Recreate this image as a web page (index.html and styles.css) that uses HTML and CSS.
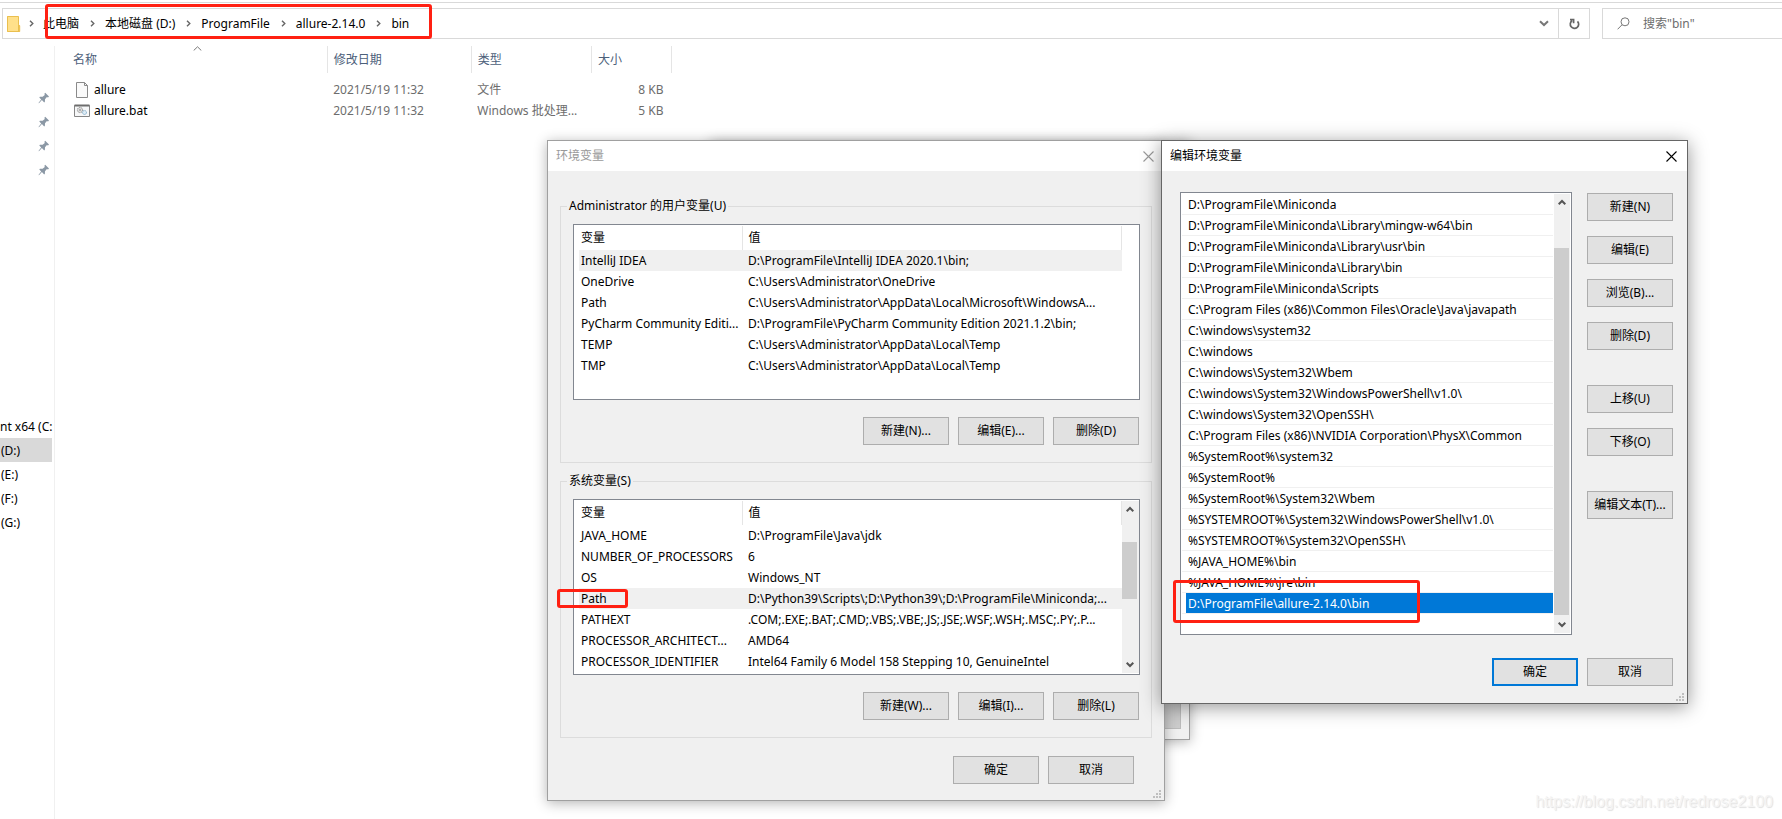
FILE: index.html
```html
<!DOCTYPE html>
<html lang="zh-CN">
<head>
<meta charset="utf-8">
<title>bin</title>
<link rel="stylesheet" href="styles.css">
</head>
<body>
<svg class="defs" width="0" height="0" aria-hidden="true">
  <symbol id="chev-right" viewBox="0 0 5 7"><path d="M1 .8 3.8 3.5 1 6.2" fill="none" stroke="#666" stroke-width="1.4"/></symbol>
  <symbol id="chev-up" viewBox="0 0 8 7"><path d="M.7 5.3 4 2 7.3 5.3" fill="none" stroke="#555" stroke-width="2"/></symbol>
  <symbol id="chev-down" viewBox="0 0 8 7"><path d="M.7 1.7 4 5 7.3 1.7" fill="none" stroke="#555" stroke-width="2"/></symbol>
  <symbol id="pin" viewBox="0 0 12 12"><path d="M7.2.8 11 4.6 10 5.4 8.9 5.1 7 7.2 6.9 9.8 6.2 10.4 3.9 8.1 1.2 11 .5 11.2.8 10.5 3.2 7.5 1.3 5.4 1.9 4.8 4.6 4.8 6.8 2.9 6.4 1.7z" fill="#8b98a5"/></symbol>
  <symbol id="close" viewBox="0 0 11 11"><path d="M.5.5 10.5 10.5M10.5.5.5 10.5" fill="none" stroke="currentColor" stroke-width="1.1"/></symbol>
  <symbol id="grip" viewBox="0 0 8 8"><path d="M6 0h2v2H6zM3 3h2v2H3zM6 3h2v2H6zM0 6h2v2H0zM3 6h2v2H3zM6 6h2v2H6z" fill="#bfbfbf"/></symbol>
</svg>

<main class="explorer">
  <header class="toolbar">
    <nav class="address" aria-label="路径">
      <svg class="folder" width="14" height="16" viewBox="0 0 14 16"><path d="M0 0h11.500v8l1.500 1.500V16H0z" fill="#ffe08a"/><path d="M.5.5h11v8l1.200 1.200v5.800H.5z" fill="none" stroke="#eabf4f"/><path d="M11.500 8.500v7" stroke="#eabf4f"/></svg>
      <svg class="sep root" width="5" height="7"><use href="#chev-right"/></svg>
      <a href="#">此电脑</a>
      <svg class="sep" width="5" height="7"><use href="#chev-right"/></svg>
      <a href="#">本地磁盘 (D:)</a>
      <svg class="sep" width="5" height="7"><use href="#chev-right"/></svg>
      <a href="#">ProgramFile</a>
      <svg class="sep" width="5" height="7"><use href="#chev-right"/></svg>
      <a href="#">allure-2.14.0</a>
      <svg class="sep" width="5" height="7"><use href="#chev-right"/></svg>
      <a href="#">bin</a>
      <button class="drop" aria-label="历史记录"><svg width="10" height="7" viewBox="0 0 10 7"><path d="M1 1.200 5 5 9 1.200" fill="none" stroke="#777" stroke-width="2"/></svg></button>
      <button class="refresh" aria-label="刷新"><svg width="12" height="12" viewBox="0 0 12 12"><path d="M9.500 3.300A4.200 4.200 0 1 1 4 2.800M2 1.700h3.600v3.600" fill="none" stroke="#666" stroke-width="1.700"/></svg></button>
    </nav>
    <label class="search">
      <svg width="13" height="13" viewBox="0 0 13 13"><circle cx="8" cy="4.800" r="4" fill="none" stroke="#777"/><path d="M5 7.800.600 12.300" stroke="#777"/></svg>
      <input type="text" placeholder='搜索"bin"' aria-label="搜索">
    </label>
  </header>

  <div class="content">
    <aside class="sidebar">
      <ul class="pins">
        <li><svg width="12" height="12"><use href="#pin"/></svg></li>
        <li><svg width="12" height="12"><use href="#pin"/></svg></li>
        <li><svg width="12" height="12"><use href="#pin"/></svg></li>
        <li><svg width="12" height="12"><use href="#pin"/></svg></li>
      </ul>
      <ul class="drives">
        <li class="system"><a href="#">nt x64 (C:</a></li>
        <li class="current"><a href="#">(D:)</a></li>
        <li><a href="#">(E:)</a></li>
        <li><a href="#">(F:)</a></li>
        <li><a href="#">(G:)</a></li>
      </ul>
    </aside>
    <div class="listing">
      <svg class="sorted" width="9" height="5" viewBox="0 0 9 5"><path d="M.700 4.500 4.500.800 8.300 4.500" fill="none" stroke="#777"/></svg>
      <table class="files">
        <colgroup><col class="c-name"><col class="c-date"><col class="c-type"><col class="c-size"></colgroup>
        <thead><tr><th>名称</th><th>修改日期</th><th>类型</th><th>大小</th></tr></thead>
        <tbody>
          <tr>
            <td><span class="file"><svg width="16" height="16" viewBox="0 0 16 16"><path d="M2.500.500h8l3 3v12h-11z" fill="#fafafa" stroke="#8a8a8a"/><path d="M10.500.500v3h3" fill="none" stroke="#8a8a8a"/></svg>allure</span></td>
            <td>2021/5/19 11:32</td><td>文件</td><td>8 KB</td>
          </tr>
          <tr>
            <td><span class="file"><svg width="16" height="16" viewBox="0 0 16 16"><path d="M.500 2.500h15v11H.500z" fill="#f6f7f8" stroke="#858585"/><path d="M.500 2.500h15" stroke="#6d6d6d" stroke-width="2"/><circle cx="6" cy="7" r="2.600" fill="#ddd" stroke="#8b8b8b" stroke-dasharray="1.200 .6"/><circle cx="6" cy="7" r=".8" fill="#777"/><circle cx="10.500" cy="9.500" r="2" fill="#dcebf5" stroke="#7da9c6" stroke-dasharray="1.200 .6"/></svg>allure.bat</span></td>
            <td>2021/5/19 11:32</td><td>Windows 批处理...</td><td>5 KB</td>
          </tr>
        </tbody>
      </table>
    </div>
  </div>
</main>

<div class="dialog backdrop-dialog" aria-hidden="true"><div class="pane"></div></div>

<section class="dialog env-dialog" aria-labelledby="env-title">
  <header class="titlebar"><h2 id="env-title">环境变量</h2><button class="close" aria-label="关闭"><svg width="11" height="11"><use href="#close"/></svg></button></header>
  <div class="env-body">
    <fieldset class="group">
      <legend>Administrator 的用户变量(U)</legend>
      <div class="box">
        <table class="vars">
          <colgroup><col class="c-var"><col></colgroup>
          <thead><tr><th>变量</th><th>值</th></tr></thead>
          <tbody>
            <tr class="marked"><td>IntelliJ IDEA</td><td>D:\ProgramFile\IntelliJ IDEA 2020.1\bin;</td></tr>
            <tr><td>OneDrive</td><td>C:\Users\Administrator\OneDrive</td></tr>
            <tr><td>Path</td><td>C:\Users\Administrator\AppData\Local\Microsoft\WindowsA...</td></tr>
            <tr><td>PyCharm Community Editi...</td><td>D:\ProgramFile\PyCharm Community Edition 2021.1.2\bin;</td></tr>
            <tr><td>TEMP</td><td>C:\Users\Administrator\AppData\Local\Temp</td></tr>
            <tr><td>TMP</td><td>C:\Users\Administrator\AppData\Local\Temp</td></tr>
          </tbody>
        </table>
      </div>
      <div class="actions"><button class="btn">新建(N)...</button><button class="btn">编辑(E)...</button><button class="btn">删除(D)</button></div>
    </fieldset>
    <fieldset class="group">
      <legend>系统变量(S)</legend>
      <div class="box">
        <table class="vars">
          <colgroup><col class="c-var"><col></colgroup>
          <thead><tr><th>变量</th><th>值</th></tr></thead>
          <tbody>
            <tr><td>JAVA_HOME</td><td>D:\ProgramFile\Java\jdk</td></tr>
            <tr><td>NUMBER_OF_PROCESSORS</td><td>6</td></tr>
            <tr><td>OS</td><td>Windows_NT</td></tr>
            <tr class="marked"><td>Path</td><td>D:\Python39\Scripts\;D:\Python39\;D:\ProgramFile\Miniconda;...</td></tr>
            <tr><td>PATHEXT</td><td>.COM;.EXE;.BAT;.CMD;.VBS;.VBE;.JS;.JSE;.WSF;.WSH;.MSC;.PY;.P...</td></tr>
            <tr><td>PROCESSOR_ARCHITECT...</td><td>AMD64</td></tr>
            <tr><td>PROCESSOR_IDENTIFIER</td><td>Intel64 Family 6 Model 158 Stepping 10, GenuineIntel</td></tr>
          </tbody>
        </table>
        <div class="scroll env-scroll">
          <button aria-label="向上滚动"><svg width="8" height="7"><use href="#chev-up"/></svg></button>
          <div class="track"><div class="thumb"></div></div>
          <button aria-label="向下滚动"><svg width="8" height="7"><use href="#chev-down"/></svg></button>
        </div>
      </div>
      <div class="actions"><button class="btn">新建(W)...</button><button class="btn">编辑(I)...</button><button class="btn">删除(L)</button></div>
    </fieldset>
    <footer class="confirm"><button class="btn">确定</button><button class="btn">取消</button></footer>
  </div>
  <svg class="grip" width="8" height="8"><use href="#grip"/></svg>
  <div class="mark mark-path"></div>
</section>

<section class="dialog edit-dialog" aria-labelledby="edit-title">
  <header class="titlebar"><h2 id="edit-title">编辑环境变量</h2><button class="close" aria-label="关闭"><svg width="11" height="11"><use href="#close"/></svg></button></header>
  <div class="edit-body">
    <div class="box path-box">
      <ul class="paths">
        <li>D:\ProgramFile\Miniconda</li>
        <li>D:\ProgramFile\Miniconda\Library\mingw-w64\bin</li>
        <li>D:\ProgramFile\Miniconda\Library\usr\bin</li>
        <li>D:\ProgramFile\Miniconda\Library\bin</li>
        <li>D:\ProgramFile\Miniconda\Scripts</li>
        <li>C:\Program Files (x86)\Common Files\Oracle\Java\javapath</li>
        <li>C:\windows\system32</li>
        <li>C:\windows</li>
        <li>C:\windows\System32\Wbem</li>
        <li>C:\windows\System32\WindowsPowerShell\v1.0\</li>
        <li>C:\windows\System32\OpenSSH\</li>
        <li>C:\Program Files (x86)\NVIDIA Corporation\PhysX\Common</li>
        <li>%SystemRoot%\system32</li>
        <li>%SystemRoot%</li>
        <li>%SystemRoot%\System32\Wbem</li>
        <li>%SYSTEMROOT%\System32\WindowsPowerShell\v1.0\</li>
        <li>%SYSTEMROOT%\System32\OpenSSH\</li>
        <li>%JAVA_HOME%\bin</li>
        <li>%JAVA_HOME%\jre\bin</li>
        <li class="selected"><span>D:\ProgramFile\allure-2.14.0\bin</span></li>
      </ul>
      <div class="scroll path-scroll">
        <button aria-label="向上滚动"><svg width="8" height="7"><use href="#chev-up"/></svg></button>
        <div class="track"><div class="thumb"></div></div>
        <button aria-label="向下滚动"><svg width="8" height="7"><use href="#chev-down"/></svg></button>
      </div>
    </div>
    <div class="side-actions">
      <div class="stack"><button class="btn">新建(N)</button><button class="btn">编辑(E)</button><button class="btn">浏览(B)...</button><button class="btn">删除(D)</button></div>
      <div class="stack"><button class="btn">上移(U)</button><button class="btn">下移(O)</button></div>
      <button class="btn">编辑文本(T)...</button>
    </div>
  </div>
  <footer class="edit-confirm"><button class="btn default">确定</button><button class="btn">取消</button></footer>
  <svg class="grip" width="8" height="8"><use href="#grip"/></svg>
  <div class="mark mark-allure"></div>
</section>

<div class="mark mark-address"></div>
<p class="watermark">https://blog.csdn.net/redrose2100</p>
</body>
</html>
```
FILE: styles.css
```css
* { box-sizing: border-box; }
body {
  margin: 0;
  min-height: 100vh;
  position: relative;
  overflow: hidden;
  background: #fff;
  color: #000;
  font: 12px/20px "Noto Sans", "Noto Sans CJK SC", sans-serif;
}
ul, h2, p { margin: 0; padding: 0; list-style: none; font-size: 12px; font-weight: 400; }
a { color: inherit; text-decoration: none; }
button, input { font: inherit; color: inherit; margin: 0; padding: 0; border: 0; background: none; border-radius: 0; }
button { display: flex; align-items: center; justify-content: center; white-space: nowrap; }
svg { display: block; flex: none; }
.defs { position: absolute; }

/* Explorer window */
.explorer { display: flex; flex-direction: column; height: 100vh; padding-top: 2px; }
.toolbar { display: flex; gap: 12px; padding: 5px 0 0 2px; border-top: 1px solid #d9d9d9; }
.address { flex: 1; display: flex; align-items: center; height: 31px; padding-left: 4px; border: 1px solid #d9d9d9; }
.address a { flex: none; }
.sep { margin: 0 10px 0 11px; }
.sep.root { margin: 0 9px 0 8px; }
.drop { margin-left: auto; width: 28px; height: 29px; }
.refresh { width: 31px; height: 29px; border-left: 1px solid #d9d9d9; }
.search { display: flex; align-items: center; gap: 13px; width: 180px; height: 31px; padding-left: 14px; border: 1px solid #d9d9d9; border-right: 0; }
.search input { width: 100px; outline: 0; }
.search input::placeholder { color: #6d6d6d; opacity: 1; }
.content { flex: 1; display: flex; margin-top: 7px; min-height: 0; }
.sidebar { width: 55px; padding-top: 40px; border-right: 1px solid #f0f0f0; }
.pins li { display: flex; align-items: center; justify-content: flex-end; height: 24px; padding-right: 4px; }
.drives { margin: 232px 2px 0 0; }
.drives li { height: 24px; line-height: 25px; padding-left: 1px; white-space: nowrap; }
.drives .system { padding-left: 0; }
.drives .current { background: #d9d9d9; }
.listing { position: relative; padding-left: 12px; }
.sorted { position: absolute; left: 138px; top: 0; }
.files { width: 605px; table-layout: fixed; border-collapse: collapse; }
.c-name { width: 260px; }
.c-date { width: 144px; }
.c-type { width: 120px; }
.c-size { width: 80px; }
.files th { height: 27px; padding: 0 6px; border-right: 1px solid #e5e5e5; color: #4c607a; font-weight: 400; text-align: left; }
.files td { height: 21px; padding: 0 6px; color: #6d6d6d; white-space: nowrap; line-height: 20px; }
.files tbody::before { content: ""; display: block; height: 6px; }
.files td:last-child { text-align: right; padding-right: 8px; }
.files td:first-child { color: #000; padding-left: 7px; }
.file { display: flex; align-items: center; gap: 4px; }

/* Dialog frame */
.dialog { position: absolute; top: 140px; background: #f0f0f0; border: 1px solid #a0a0a0; box-shadow: 0 2px 12px rgba(0, 0, 0, .3); }
.titlebar { display: flex; align-items: center; justify-content: space-between; height: 30px; padding: 0 10px 0 8px; background: #fff; }
.close { width: 11px; height: 20px; }
.grip { position: absolute; right: 3px; bottom: 2px; }
.btn { flex: none; width: 86px; height: 28px; border: 1px solid #adadad; background: #e1e1e1; }
.btn.default { border: 2px solid #0078d7; }
.box { display: flex; padding: 1px; background: #fff; border: 1px solid #828790; overflow: hidden; }

.backdrop-dialog { left: 710px; width: 480px; height: 600px; padding: 8px; }
.backdrop-dialog .pane { height: 580px; background: #cdcdcd; border: 1px solid #bcbcbc; }

.scroll { flex: none; display: flex; flex-direction: column; width: 17px; background: #f0f0f0; }
.scroll button { height: 17px; width: 16px; }
.track { flex: 1; }
.thumb { width: 15px; background: #cdcdcd; }

/* Environment variables dialog */
.env-dialog { left: 547px; width: 618px; }
.env-dialog .titlebar { color: #999; }
.env-body { padding: 25px 12px 16px; }
.group { margin: 0 0 8px; padding: 8px 11px 17px 12px; border: 1px solid #dcdcdc; min-width: 0; }
.group legend { margin-left: -6px; padding: 0 2px; line-height: 20px; }
.group .box { height: 176px; justify-content: space-between; }
.vars { width: 543px; height: 0; margin-left: 4px; flex: none; table-layout: fixed; border-collapse: collapse; }
.c-var { width: 163px; }
.vars th { height: 24px; padding: 0 6px; border-right: 1px solid #e5e5e5; font-weight: 400; text-align: left; }
.vars td { height: 21px; padding: 0 6px; line-height: 20px; white-space: nowrap; }
.vars th:first-child, .vars td:first-child { padding-left: 2px; }
.vars .marked td { background: #f0f0f0; }
.actions { display: flex; justify-content: flex-end; gap: 9px; margin: 17px 1px 0 0; }
.confirm { display: flex; justify-content: flex-end; gap: 9px; margin: 18px 18px 0 0; }
.env-scroll .thumb { height: 57px; margin-top: 24px; }

/* Edit dialog */
.edit-dialog { left: 1161px; width: 527px; border-color: #666; box-shadow: 0 3px 18px rgba(0, 0, 0, .42); }
.edit-body { display: flex; gap: 15px; padding: 21px 14px 0 18px; }
.path-box { flex: 1; height: 443px; }
.paths { flex: 1; }
.paths li { height: 21px; padding-left: 6px; border-bottom: 1px solid #f0f0f0; white-space: nowrap; line-height: 22px; margin-right: 1px; }
.paths .selected { padding-left: 4px; }
.paths .selected span { display: block; height: 20px; padding-left: 2px; background: #0078d7; color: #fff; line-height: 22px; }
.path-scroll { width: 16px; }
.path-scroll .thumb { height: 367px; margin-top: 37px; }
.side-actions { display: flex; flex-direction: column; gap: 35px; padding-top: 1px; }
.stack { display: flex; flex-direction: column; gap: 15px; }
.edit-confirm { display: flex; justify-content: flex-end; gap: 9px; padding: 23px 14px 17px; }

/* Red annotations */
.mark { position: absolute; border: 3px solid #ff2012; border-radius: 3px; pointer-events: none; }
.mark-address { left: 45px; top: 4px; width: 387px; height: 35px; }
.mark-path { left: 9px; top: 448px; width: 71px; height: 19px; }
.mark-allure { left: 11px; top: 439px; width: 247px; height: 43px; }

.watermark { position: absolute; right: 9px; bottom: 7px; font: 16px/20px "Liberation Sans", sans-serif; color: #f4f4f4; text-shadow: 1px 1px 1px #e0e0e0; }
```
